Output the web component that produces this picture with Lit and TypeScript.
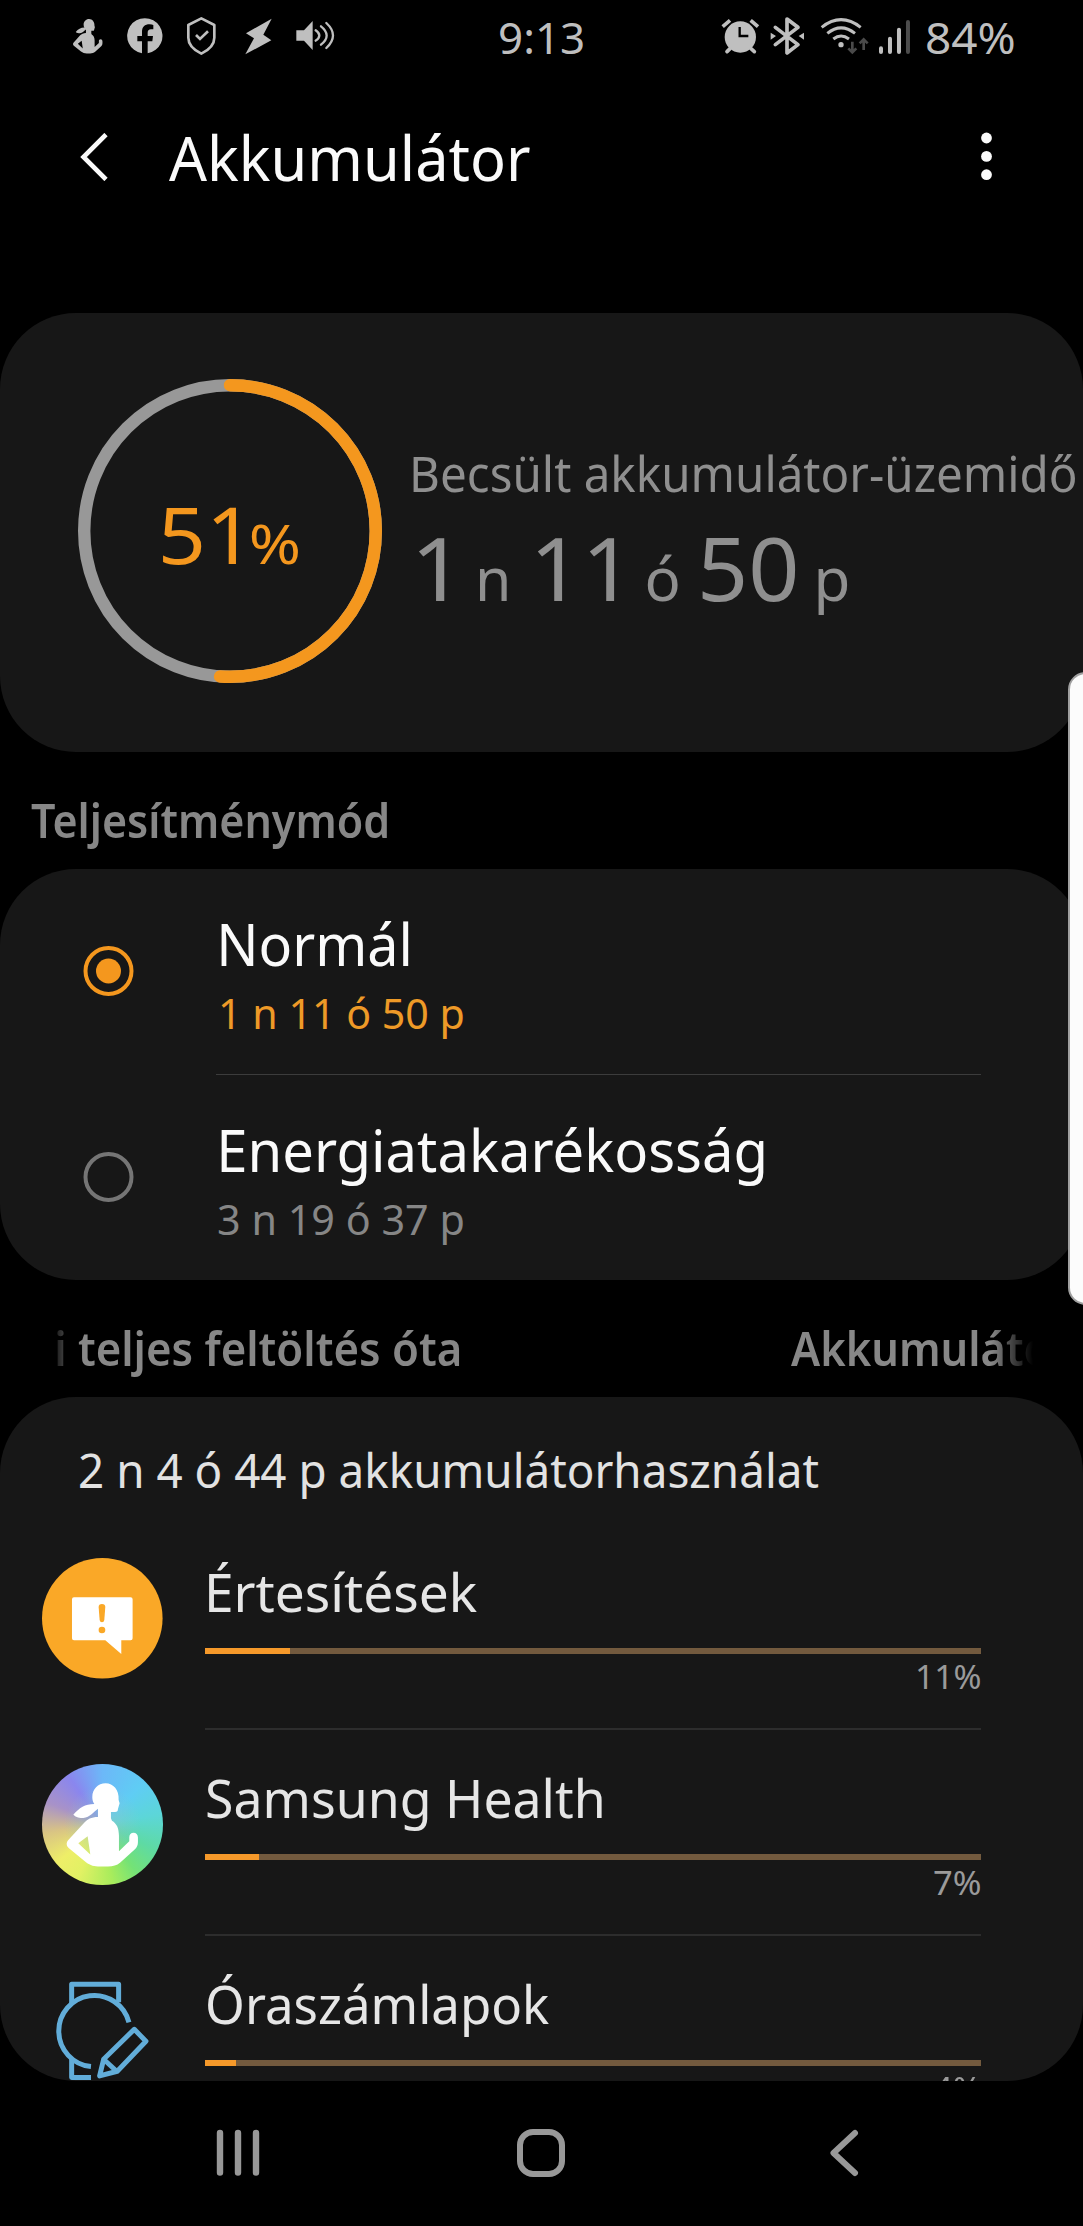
import { LitElement, html, svg, css } from "lit";
import { customElement, property } from "lit/decorators.js";

/** One line of text whose inked width is stretched to `width` pixels. */
@customElement("fit-text")
class FitText extends LitElement {
  @property({ type: Number }) width = 100;
  @property() text = "";

  static styles = css`
    :host {
      display: block;
      flex: none;
      white-space: pre;
    }
    .line {
      display: inline-block;
      transform-origin: 0 0;
    }
  `;

  updated() {
    const cs = getComputedStyle(this);
    const ctx = document.createElement("canvas").getContext("2d")!;
    ctx.font = `${cs.fontWeight} ${cs.fontSize} ${cs.fontFamily}`;
    const m = ctx.measureText(this.text);
    const k = this.width / (m.actualBoundingBoxLeft + m.actualBoundingBoxRight);
    const line = this.renderRoot.querySelector<HTMLElement>(".line")!;
    line.style.transform = `translateX(${m.actualBoundingBoxLeft * k}px) scaleX(${k})`;
    this.style.width = `${this.width}px`;
  }

  render() {
    return html`<span class="line">${this.text}</span>`;
  }
}

const fit = (text: string, width: number, cls = "") =>
  html`<fit-text class=${cls} .text=${text} .width=${width}></fit-text>`;

const runner = svg`
  <path fill-rule="evenodd" d="M257 128C234 128 217 146 217 169C217 178 219 185 223 190C195 190 178 202 160 222C168 230 180 232 190 232C210 230 222 212 234 204V229C214 229 202 236 192 247L145 298C138 306 139 315 146 322L198 365C212 375 222 378 240 378H264C280 378 290 375 301 366L345 326C351 320 354 313 354 304V291C354 281 348 276 341 276C333 276 328 281 328 290V302L297 332V285C297 262 290 248 276 240L273 233V214H285C292 214 294 211 294 205L299 188L296 178C298 148 280 128 257 128ZM203 287L175 308L211 342Z"/>`;

const statusIcons = [
  svg`<g fill="currentColor" transform="translate(-18.8,-40.9) scale(.413)">${runner}</g>`,
  svg`<path fill="currentColor" d="M75 115V79H61V63H75V51C75 36 83 28 98 28Q105 28 109 30V43H102C95 43 92 47 92 53V63H108L106 79H92V115A53 53 0 1 0 75 115Z"/>`,
  svg`<path fill="none" stroke="currentColor" stroke-width="8" stroke-linejoin="round" d="M85 10L124 30V68C124 88 109 104 85 116C61 104 46 88 46 68V30Z"/><path fill="none" stroke="currentColor" stroke-width="8" d="M69 60L81 72L105 49"/>`,
  svg`<path fill="currentColor" d="M125 11L48 55L72 70L46 118L124 76L100 59Z"/>`,
  svg`<path fill="currentColor" d="M28 46H51L77 18V105L51 77H28Z"/><g fill="none" stroke="currentColor" stroke-width="7" stroke-linecap="round"><path d="M86 46Q108 61 86 77"/><path d="M102 34Q136 61 102 89"/><path d="M118 24Q158 61 118 99"/></g>`,
];

const alarm = svg`<g stroke="currentColor" fill="none">
  <path stroke-width="11" d="M128 80L150 61M234 80L212 61"/>
  <path stroke-width="11" stroke-linecap="round" d="M150 146L141 155M213 146L223 155"/></g>
  <circle cx="181" cy="111" r="47" fill="currentColor"/>
  <path fill="none" stroke="#000" stroke-width="7" d="M179 81V108H205"/>`;
const bluetooth = svg`<path fill="none" stroke="currentColor" stroke-width="11" stroke-linejoin="round" stroke-linecap="round" d="M286 82L354 134L321 159V57L354 82L286 134"/>
  <path fill="currentColor" d="M272 98L288 108L272 119ZM372 98L356 108L372 119Z"/>`;
const wifi = svg`<g fill="none" stroke="currentColor" stroke-width="9"><path d="M427 82Q485 36 544 82"/><path d="M444 100Q485 67 527 100"/><path d="M462 117Q485 99 509 117"/></g>
  <circle cx="485" cy="134" r="8" fill="currentColor"/>
  <g fill="none" stroke="#4a4a4a" stroke-width="8"><path d="M519 125V155M507 145L519 157L531 145"/><path d="M553 150V120M541 130L553 118L565 130"/></g>`;
const signal = svg`<g fill="none" stroke="currentColor" stroke-width="12" stroke-linecap="round"><path d="M603 145V156M630 116V156M657 89V156"/><path stroke="#4c4c4c" d="M684 66V156"/></g>`;

@customElement("status-bar")
class StatusBar extends LitElement {
  static styles = css`
    :host {
      display: grid;
      grid-template-columns: 1fr auto 1fr;
      align-items: center;
      height: 73px;
      padding: 0 69px 0 60px;
      box-sizing: border-box;
      color: #bfbfbf;
      font-size: 44px;
      line-height: 60px;
    }
    .left,
    .right {
      display: flex;
      align-items: center;
    }
    .right {
      justify-content: flex-end;
    }
    .time {
      margin-left: 9px;
    }
    .cell {
      width: 56.67px;
      height: 43.33px;
      flex: none;
    }
    .tall {
      height: 43.33px;
      flex: none;
    }
    .alarm { width: 41px; margin-right: 9px; }
    .bt { width: 35px; margin-right: 15.6px; }
    .wifi { width: 50px; margin-right: 7.3px; }
    .signal { width: 33.3px; margin-right: 16px; }
  `;

  render() {
    return html`
      <div class="left">
        ${statusIcons.map((i) => html`<svg class="cell" viewBox="0 0 170 130">${i}</svg>`)}
      </div>
      <div class="time">${fit("9:13", 83)}</div>
      <div class="right">
        <svg class="tall alarm" viewBox="120 45 123 130">${alarm}</svg>
        <svg class="tall bt" viewBox="270 45 105 130">${bluetooth}</svg>
        <svg class="tall wifi" viewBox="422 45 150 130">${wifi}</svg>
        <svg class="tall signal" viewBox="594 45 100 130">${signal}</svg>
        ${fit("84%", 87)}
      </div>`;
  }
}

@customElement("charge-card")
class ChargeCard extends LitElement {
  @property({ type: Number }) percent = 51;

  static styles = css`
    :host {
      display: flex;
      align-items: flex-start;
      height: 438.5px;
      padding: 66px 0 0 78px;
      box-sizing: border-box;
      border-radius: 76px;
      background: #171717;
    }
    .gauge {
      display: grid;
      width: 304px;
      height: 304px;
      flex: none;
    }
    .ring,
    .value {
      grid-area: 1 / 1;
    }
    .value {
      display: flex;
      align-items: baseline;
      padding: 104px 0 0 84px;
      gap: 14px;
      color: #f4971e;
      line-height: 1.3;
    }
    .num { font-size: 79px; }
    .pct { font-size: 55px; }
    .info {
      padding: 62px 0 0 31px;
      color: #8f8f8f;
    }
    .caption {
      font-size: 49px;
      line-height: 64px;
      margin-bottom: 12px;
    }
    .duration {
      display: flex;
      align-items: baseline;
      padding-left: 5px;
      line-height: 1;
    }
    .big { font-size: 88px; line-height: 100px; }
    .unit { font-size: 60px; }
    .g1 { margin-left: 35px; }
    .g2 { margin-left: 29px; }
    .g3 { margin-left: 33px; }
    .g4 { margin-left: 23px; }
  `;

  render() {
    const c = 2 * Math.PI * 146;
    return html`
      <div class="gauge">
        <svg class="ring" viewBox="0 0 304 304" fill="none" stroke-width="12.4">
          <circle cx="152" cy="152" r="145.8" stroke="#989898" />
          <circle cx="152" cy="152" r="145.8" stroke="#f4971e" stroke-linecap="round"
            transform="rotate(-90 152 152)" stroke-dasharray="${(c * this.percent) / 100} ${c}" />
        </svg>
        <div class="value">${fit("51", 75, "num")}${fit("%", 48, "pct")}</div>
      </div>
      <div class="info">
        ${fit("Becsült akkumulátor-üzemidő", 662, "caption")}
        <div class="duration">
          ${fit("1", 27, "big")}${fit("n", 27.5, "unit g1")}${fit("11", 78, "big g2")}
          ${fit("ó", 31, "unit g3")}${fit("50", 94, "big g4")}${fit("p", 29, "unit g4")}
        </div>
      </div>`;
  }
}

interface Mode { name: string; nameW: number; time: string; timeW: number; cls: string; on: boolean }

@customElement("mode-card")
class ModeCard extends LitElement {
  static styles = css`
    :host {
      display: block;
      height: 410.5px;
      border-radius: 76px;
      background: #171717;
      overflow: hidden;
    }
    .row {
      display: flex;
      align-items: center;
      height: 206px;
      padding: 0 102px 0 83px;
    }
    .radio {
      width: 51px;
      height: 51px;
      flex: none;
      margin-right: 82px;
      margin-bottom: 2px;
      color: #757575;
    }
    .on { color: #f4971e; }
    .text {
      flex: 1;
      height: 206px;
      padding: 39px 0 0 5px;
      box-sizing: border-box;
    }
    .row:first-child .text { border-bottom: 1.5px solid #3c3c3c; }
    .name {
      font-size: 59px;
      line-height: 70px;
      margin-bottom: 9.5px;
      color: #fafafa;
    }
    .time {
      font-size: 42px;
      line-height: 50px;
      color: #868686;
    }
    .idle { margin-left: -3px; }
    .lit { color: #ee9a27; }
  `;

  modes: Mode[] = [
    { name: "Normál", nameW: 188, time: "1 n 11 ó 50 p", timeW: 242, cls: "time lit", on: true },
    { name: "Energiatakarékosság", nameW: 543, time: "3 n 19 ó 37 p", timeW: 245, cls: "time idle", on: false },
  ];

  render() {
    return this.modes.map(
      (m) => html`<div class="row">
        <svg class="radio ${m.on ? "on" : ""}" viewBox="0 0 51 51">
          <circle cx="25.5" cy="25" r="23" fill="none" stroke="currentColor" stroke-width="4" />
          ${m.on ? svg`<circle cx="25.5" cy="25" r="12.5" fill="currentColor"/>` : ""}
        </svg>
        <div class="text">
          ${fit(m.name, m.nameW, "name")}
          ${fit(m.time, m.timeW, m.cls)}
        </div>
      </div>`
    );
  }
}

const notice = html`<svg class="icon" viewBox="0 0 362 362">
  <circle cx="181" cy="181" r="181" fill="#faa827" />
  <path fill="#fff" d="M96 118H266Q272 118 272 124V241Q272 247 266 247H238V288L190 247H96Q90 247 90 241V124Q90 118 96 118Z" />
  <path fill="#faa827" d="M170 147Q170 138 180 138Q190 138 190 147L187 186Q186 193 180 193Q174 193 173 186Z" />
  <circle cx="180" cy="216" r="10" fill="#faa827" />
</svg>`;
const health = html`<div class="icon health"><svg viewBox="66 70 362 362" fill="#fff">${runner}</svg></div>`;
const watch = html`<svg class="icon" viewBox="66 688 362 362" fill="none" stroke="#62add9" stroke-width="15" stroke-linejoin="round">
  <path d="M155 790V731H296V785" />
  <path d="M327 845A107 107 0 1 0 213 978" />
  <path d="M155 955V1011H213" />
  <path d="M343 866L378 902L292 992L239 1006L251 956Z" />
  <path d="M251 956L290 992" />
</svg>`;

@customElement("usage-card")
class UsageCard extends LitElement {
  static styles = css`
    :host {
      display: block;
      height: 683.5px;
      padding-top: 43px;
      box-sizing: border-box;
      border-radius: 76px;
      background: #171717;
      overflow: hidden;
    }
    .total {
      font-size: 47px;
      line-height: 60px;
      margin: 0 0 24px 80px;
      color: #e2e2e2;
    }
    .row {
      display: flex;
      height: 206px;
      padding: 0 102px 0 42px;
      gap: 42px;
    }
    .icon {
      display: block;
      width: 120.6px;
      height: 120.6px;
      margin-top: 34px;
      flex: none;
    }
    .health {
      border-radius: 50%;
      background:
        radial-gradient(circle at 50% 50%, #8cc6c8b0, #8cc6c800 45%),
        conic-gradient(#6cb8f8, #5fcdf4 45deg, #5cd6d8 80deg, #5edaa4 115deg, #74e276 145deg, #a8ec5c 170deg, #e2f164 205deg, #eeee68 230deg, #d9c484 262deg, #a892c8 292deg, #8a86ee 325deg, #6cb8f8);
    }
    .body {
      flex: 1;
      height: 206px;
      padding-top: 38px;
      box-sizing: border-box;
      border-bottom: 2px solid #2d2d2d;
    }
    .name {
      font-size: 53px;
      line-height: 60px;
      color: #e6e6e6;
    }
    .track {
      height: 6px;
      margin: 26px 0 6px;
      background: #735a3e;
    }
    .fill {
      height: 100%;
      background: #f5992a;
    }
    .pct {
      display: flex;
      justify-content: flex-end;
      padding-right: 1.5px;
      font-size: 33px;
      line-height: 34px;
      color: #9a9a9a;
    }
  `;

  apps = [
    { icon: notice, name: "Értesítések", w: 268, inset: 4, pct: 11, pctW: 63 },
    { icon: health, name: "Samsung Health", w: 395, inset: 2, pct: 7, pctW: 46 },
    { icon: watch, name: "Óraszámlapok", w: 341, inset: 3, pct: 4, pctW: 47 },
  ];

  render() {
    return html`
      ${fit("2 n 4 ó 44 p akkumulátorhasználat", 738, "total")}
      ${this.apps.map(
        (a) => html`<div class="row">
          ${a.icon}
          <div class="body">
            <div class="name" style="padding-left:${a.inset}px">${fit(a.name, a.w)}</div>
            <div class="track"><div class="fill" style="width:${a.pct}%"></div></div>
            <div class="pct">${fit(a.pct + "%", a.pctW)}</div>
          </div>
        </div>`
      )}`;
  }
}

@customElement("app-root")
class AppRoot extends LitElement {
  static styles = css`
    :host {
      display: flex;
      flex-direction: column;
      position: relative;
      width: 1083px;
      height: 2226px;
      overflow: hidden;
      background: #000;
      font-family: "Noto Sans", "Open Sans", sans-serif;
    }
    .header {
      display: flex;
      align-items: center;
      height: 168px;
      margin-bottom: 72px;
      padding: 0 91px 0 80px;
      color: #fafafa;
      font-size: 62px;
      line-height: 80px;
    }
    .back {
      width: 28px;
      height: 48px;
      margin-right: 61px;
    }
    .more {
      width: 11px;
      height: 50px;
      margin-left: auto;
    }
    .label {
      display: flex;
      justify-content: space-between;
      height: 117.5px;
      padding: 38px 31px 0;
      box-sizing: border-box;
      color: #878787;
      font-size: 46px;
      font-weight: 600;
      line-height: 60px;
    }
    .tabs {
      margin: 0 48px;
      padding: 38px 0 0 9px;
      overflow: hidden;
      mask-image: linear-gradient(90deg, transparent 2px, #000 32px, #000 calc(100% - 44px), transparent calc(100% - 2px));
    }
    .tabs .next { margin-right: -14px; }
    .nav {
      display: grid;
      grid-template-columns: repeat(3, 1fr);
      place-items: center;
      height: 145px;
      padding: 0 88px 0 86px;
      color: #989898;
    }
    .nav svg {
      width: 50px;
      height: 50px;
    }
    .edge {
      position: absolute;
      right: -20px;
      top: 672px;
      width: 35px;
      height: 633px;
      box-sizing: border-box;
      border: 2px solid #a0a0a0;
      border-radius: 18px;
      background: #fcfcfc;
    }
  `;

  render() {
    return html`
      <status-bar></status-bar>
      <div class="header">
        <svg class="back" viewBox="0 0 28 48" fill="none" stroke="currentColor" stroke-width="4.6">
          <path d="M26 1.5L3.5 24L26 46.5" />
        </svg>
        ${fit("Akkumulátor", 361)}
        <svg class="more" viewBox="0 0 11 50" fill="currentColor">
          <circle cx="5.5" cy="6" r="5.4" /><circle cx="5.5" cy="24.4" r="5.4" /><circle cx="5.5" cy="42.7" r="5.4" />
        </svg>
      </div>
      <charge-card></charge-card>
      <div class="label">${fit("Teljesítménymód", 356.5)}</div>
      <mode-card></mode-card>
      <div class="label tabs">
        ${fit("i teljes feltöltés óta", 402.5)}${fit("Akkumuláto", 258, "next")}
      </div>
      <usage-card></usage-card>
      <div class="nav">
        <svg viewBox="0 0 50 50" stroke="currentColor" stroke-width="6.4" stroke-linecap="round">
          <path d="M7 5V44.5M25 5V44.5M43 5V44.5" />
        </svg>
        <svg viewBox="0 0 50 50" fill="none" stroke="currentColor" stroke-width="6">
          <rect x="4" y="4" width="42" height="42" rx="13" />
        </svg>
        <svg viewBox="0 0 50 50" fill="none" stroke="currentColor" stroke-width="6" stroke-linecap="round" stroke-linejoin="round">
          <path d="M36 5L14.5 25L36 45" />
        </svg>
      </div>
      <div class="edge"></div>`;
  }
}
